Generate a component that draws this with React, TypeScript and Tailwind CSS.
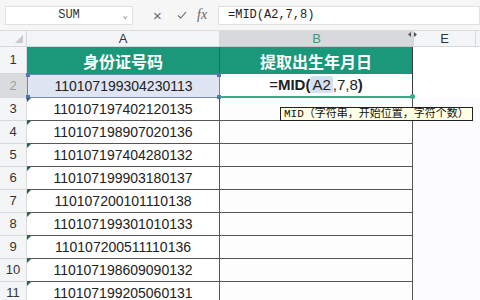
import React from 'react'

const ids = [
  '110107197402120135',
  '110107198907020136',
  '110107197404280132',
  '110107199903180137',
  '110107200101110138',
  '110107199301010133',
  '110107200511110136',
  '110107198609090132',
  '110107199205060131',
]

const sans = { fontFamily: '"Liberation Sans", Arial, sans-serif' }
const cjk = { fontFamily: '"Noto Sans CJK SC", "Liberation Sans", sans-serif' }
const mono = { fontFamily: '"Liberation Mono", "Noto Sans CJK SC", monospace' }

function RowHead({ n, active }: { n: number; active?: boolean }) {
  return (
    <div
      className={`flex items-center justify-center border-r border-b border-[#d6d8db] text-[13px] ${
        active ? 'bg-[#d9dbde] text-[#8fa6a0]' : 'bg-[#f4f5f6] text-[#333]'
      }`}
      style={sans}
    >
      {n}
    </div>
  )
}

export default function App() {
  return (
    <div className="relative w-[480px] h-[300px] overflow-hidden bg-white">
      {/* formula bar */}
      <div className="flex items-center h-[30px] bg-[#f6f6f6] pl-[5px]">
        <div className="relative flex items-center justify-center w-[128px] h-[19px] bg-white border border-[#e1e1e1] text-[12px] text-[#333]" style={mono}>
          SUM
          <span className="absolute right-[4px] top-[3px] text-[9px] text-[#666]">⌄</span>
        </div>
        <div className="flex items-center w-[85px] h-[19px] text-[#666]">
          <span className="w-[25px] pl-[20px] text-[15px] leading-none" style={sans}>×</span>
          <svg className="ml-[19px]" width="10" height="8" viewBox="0 0 10 8">
            <path d="M1 4.5 L3.8 7 L9 1" fill="none" stroke="#666" strokeWidth="1.1" />
          </svg>
          <span className="ml-[10px] text-[14px] italic leading-none" style={{ fontFamily: '"Liberation Serif", serif' }}>fx</span>
        </div>
        <div className="flex items-center flex-1 h-[19px] bg-white border border-[#e1e1e1] pl-[9px] text-[12px] text-[#222]" style={mono}>
          =MID(A2,7,8)
        </div>
      </div>

      {/* sheet */}
      <div className="grid grid-cols-[27px_193px_193px_63px_1fr] grid-rows-[16px_27px_24px_repeat(9,23px)] border-t border-[#dcdcdc]">
        {/* column headers */}
        <div className="relative bg-[#f4f5f6] border-r border-b border-[#d6d8db]">
          <span className="absolute right-[3px] bottom-[3px] w-0 h-0 border-l-[8px] border-l-transparent border-b-[8px] border-b-[#c6c8cb]" />
        </div>
        <div className="flex items-center justify-center bg-[#f4f5f6] border-r border-b border-[#d6d8db] text-[13px] text-[#333]" style={sans}>A</div>
        <div className="relative flex items-center justify-center bg-[#d7d9dc] border-b border-[#c3c6c9] text-[13px] text-[#3c9a74]" style={sans}>
          B
          <svg className="absolute right-[-4px] top-[1px]" width="9" height="5" viewBox="0 0 9 5">
            <path d="M3 0 L0 2.5 L3 5 Z M6 0 L9 2.5 L6 5 Z" fill="#555" />
          </svg>
        </div>
        <div className="flex items-center justify-center bg-[#f4f5f6] border-l border-r border-b border-[#d6d8db] text-[13px] text-[#333]" style={sans}>E</div>
        <div className="bg-[#f4f5f6] border-b border-[#d6d8db]" />

        {/* row 1 */}
        <RowHead n={1} />
        <div className="flex items-center justify-center bg-[#1b977a] border-r border-[#15735d] text-white text-[16px] font-bold" style={cjk}>身份证号码</div>
        <div className="flex items-center justify-center bg-[#1b977a] border-r border-[#3a3a3a] text-white text-[16px] font-bold" style={cjk}>提取出生年月日</div>
        <div />
        <div />

        {/* row 2 */}
        <RowHead n={2} active />
        <div className="relative flex items-center justify-center bg-[#dfe5f2] border border-[#7285b5] text-[14px] text-[#222]" style={sans}>
          110107199304230113
          <span className="absolute left-[-2px] top-[-2px] w-[4px] h-[4px] bg-[#5a72b0]" />
          <span className="absolute right-[-2px] top-[-2px] w-[4px] h-[4px] bg-[#5a72b0]" />
          <span className="absolute left-[-2px] bottom-[-2px] w-[4px] h-[4px] bg-[#5a72b0]" />
          <span className="absolute right-[-2px] bottom-[-2px] w-[4px] h-[4px] bg-[#5a72b0]" />
        </div>
        <div className="relative flex items-center justify-center border-b-2 border-r border-b-[#3da884] border-r-[#3a3a3a] text-[15px] text-[#222]" style={sans}>
          <span>
            =<b>MID(</b>
            <span className="bg-[#d6dff0] px-[2px] rounded-[3px]">A2</span>,7,8<b>)</b>
          </span>
          <span className="absolute right-[-3px] bottom-[-3px] w-[5px] h-[5px] rounded-full bg-[#3da884]" />
        </div>
        <div />
        <div />

        {/* rows 3-11 */}
        {ids.map((id, i) => (
          <React.Fragment key={id}>
            <RowHead n={i + 3} />
            <div className="relative flex items-center justify-center border-r border-b border-[#555] text-[14px] text-[#222]" style={sans}>
              <span className="absolute left-0 top-0 w-0 h-0 border-t-[4px] border-t-[#1f6b45] border-r-[4px] border-r-transparent" />
              {id}
            </div>
            <div className="border-r border-b border-[#555] bg-[#fdfdfe]" />
            <div className="bg-[#fcfcfe]" />
            <div className="bg-[#fcfcfe]" />
          </React.Fragment>
        ))}
      </div>

      {/* function tooltip */}
      <div className="absolute left-[280px] top-[107px] flex items-center h-[14px] px-[3px] bg-[#ffffe6] border border-[#222] text-[11px] leading-none text-[#111] whitespace-nowrap" style={mono}>
        MID（字符串，开始位置，字符个数）
      </div>
    </div>
  )
}
